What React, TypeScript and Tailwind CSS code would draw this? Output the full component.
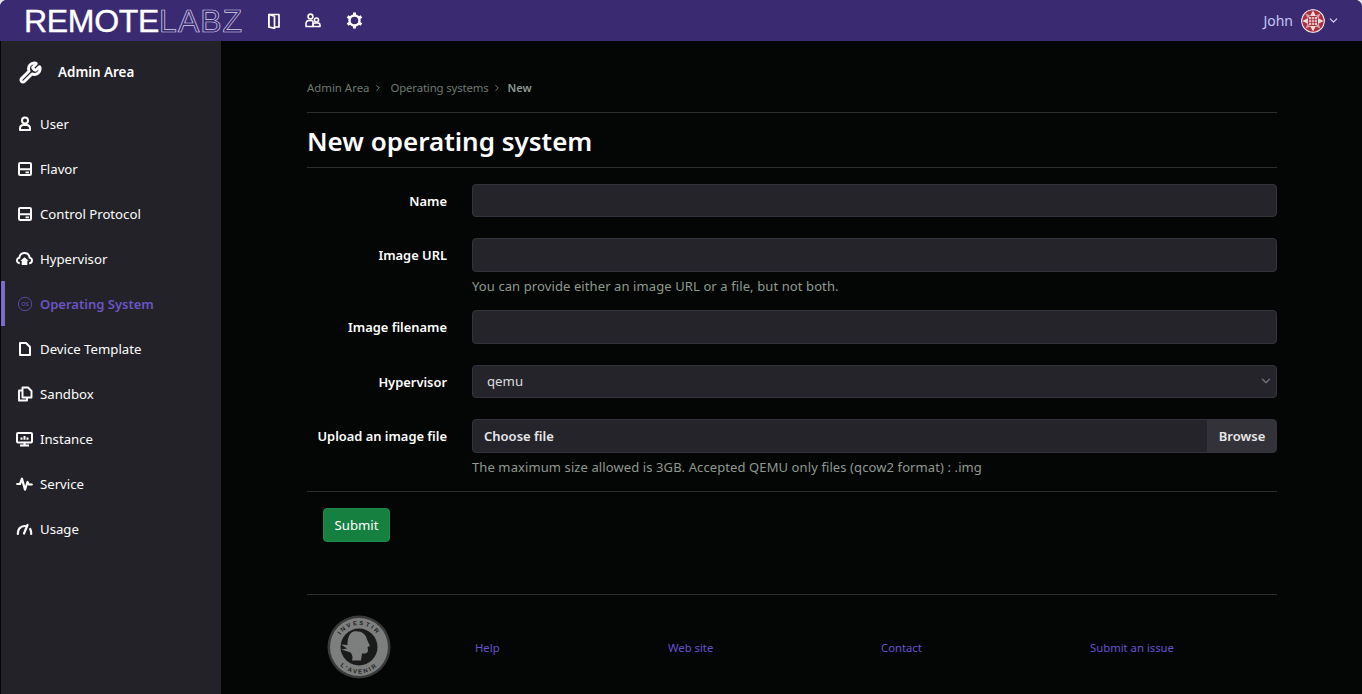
import React from 'react';
import { ChevronDown, ChevronRight, Wrench } from 'lucide-react';

const sans = "font-['Noto_Sans','Open_Sans',sans-serif]";

// small sidebar glyphs, 16px grid like the gitlab icon set
function UserIcon() {
  return (
    <svg width="16" height="16" viewBox="0 0 16 16" fill="none" stroke="white" strokeWidth="2">
      <circle cx="8" cy="4.500" r="3" />
      <path d="M3 14v-1.500c0-2 1.500-3.500 3.500-3.500h3c2 0 3.500 1.500 3.500 3.500V14z" strokeLinejoin="round" />
    </svg>
  );
}

function ServerIcon() {
  return (
    <svg width="16" height="16" viewBox="0 0 16 16" fill="none">
      <rect x="2" y="2" width="12" height="12" rx="1.200" stroke="white" strokeWidth="2" />
      <path d="M2 8.200h12" stroke="white" strokeWidth="2" />
      <rect x="8.500" y="10.500" width="3.500" height="1.800" fill="white" />
    </svg>
  );
}

function CloudIcon() {
  return (
    <svg width="17" height="16" viewBox="0 0 17 16" fill="none">
      <path d="M3.800 12.200C1.900 12.200 1 10.900 1 9.500c0-1.400 1-2.500 2.300-2.600C3.700 4 5.800 2 8.500 2s4.800 2 5.200 4.900c1.300.1 2.300 1.200 2.300 2.600 0 1.400-.9 2.700-2.800 2.700" stroke="white" strokeWidth="1.900" />
      <path d="M8.500 6.200l4.200 3.600h-1.400v4.200H5.700V9.800H4.300z" fill="white" />
    </svg>
  );
}

function OsIcon() {
  return (
    <svg width="16" height="16" viewBox="0 0 16 16" fill="none">
      <circle cx="8" cy="8" r="6.700" stroke="#5a4aa8" strokeWidth="1" />
      <text x="8" y="10" fontSize="5.500" fontFamily="Noto Sans, sans-serif" textAnchor="middle" fill="#5a4aa8">OS</text>
    </svg>
  );
}

function FileIcon() {
  return (
    <svg width="16" height="16" viewBox="0 0 16 16" fill="none" stroke="white" strokeWidth="2" strokeLinejoin="round">
      <path d="M3 2h6l4 4v8H3z" />
    </svg>
  );
}

function CopyIcon() {
  return (
    <svg width="16" height="16" viewBox="0 0 16 16" fill="none" stroke="white" strokeWidth="1.900" strokeLinejoin="round">
      <path d="M5.500 1.500h5.500l3.500 3.500v6.500h-9z" />
      <path d="M5.500 4.500H2v10h8v-3" />
    </svg>
  );
}

function MonitorIcon() {
  return (
    <svg width="17" height="16" viewBox="0 0 17 16" fill="none">
      <rect x="1" y="2" width="15" height="9.500" rx="1" stroke="white" strokeWidth="2" />
      <path d="M4.500 6.500h2v2.200h-2zM7.500 5h2v3.700h-2zM10.500 6.500h2v2.200h-2z" fill="white" />
      <path d="M4 14.500h9" stroke="white" strokeWidth="2" />
      <path d="M8.500 11.500v2.500" stroke="white" strokeWidth="2" />
    </svg>
  );
}

function PulseIcon() {
  return (
    <svg width="17" height="16" viewBox="0 0 17 16" fill="none" stroke="white" strokeWidth="2.200" strokeLinejoin="round" strokeLinecap="round">
      <path d="M1.200 8H4l2-5.300 3 11L11.500 6l1.500 2.500h2.800" />
    </svg>
  );
}

function GaugeIcon() {
  return (
    <svg width="17" height="16" viewBox="0 0 17 16" fill="none" stroke="white" strokeWidth="2.200" strokeLinecap="round">
      <path d="M1.800 13C1.500 8.500 4.500 5 8.500 5c.7 0 1.400.1 2 .3" />
      <path d="M14.200 8c.8 1.500 1.100 3.300 1 5" />
      <path d="M8 12.500L11.500 4" />
    </svg>
  );
}

function DoorIcon() {
  return (
    <svg width="12" height="16" viewBox="0 0 12 16" fill="none" stroke="white" strokeWidth="1.700" strokeLinejoin="round">
      <path d="M1 1.500h10v12.500H1z" />
      <path d="M1 1.500l5.500 1.800v12L1 14z" fill="#3a2a72" />
    </svg>
  );
}

function UsersIcon() {
  return (
    <svg width="16" height="15" viewBox="0 0 16 15" fill="none" stroke="white" strokeWidth="1.600">
      <circle cx="5.500" cy="3.500" r="2.400" />
      <circle cx="11.500" cy="7" r="2" />
      <path d="M1 13.500V11c0-2 1-3.500 3-3.500h2c1 0 1.500.5 2 1v5z" strokeLinejoin="round" />
      <path d="M8 13.500v-1c0-1.500 1-2.500 2-2.500h3c1.200 0 2 1 2 2.500v1z" strokeLinejoin="round" />
    </svg>
  );
}

function GearIcon() {
  return (
    <svg width="17" height="17" viewBox="0 0 17 17" fill="none">
      <circle cx="8.500" cy="8.500" r="5" stroke="white" strokeWidth="2.400" />
      <path d="M8.500 .5v2.500M8.500 14v2.500M1.500 4.500l2.200 1.300M13.300 11.200l2.200 1.300M1.500 12.500l2.200-1.300M13.300 5.800l2.200-1.300" stroke="white" strokeWidth="3" />
    </svg>
  );
}

function Avatar() {
  return (
    <svg width="24" height="24" viewBox="0 0 24 24" className="rounded-full">
      <circle cx="12" cy="12" r="12" fill="#e8dfe2" />
      <circle cx="12" cy="12" r="10.700" fill="#a8323f" />
      <path d="M12 1.500l3 5.500H9zM12 22.500L9 17h6zM1.500 12L7 9v6zM22.500 12L17 15V9z" fill="#f0d8da" />
      <path d="M4.500 4.500l5 2-3 3zM19.500 4.500l-2 5-3-3zM4.500 19.500l2-5 3 3zM19.500 19.500l-5-2 3-3z" fill="#d8a0a6" />
      <rect x="8" y="8" width="8" height="8" fill="#e8c4c8" />
      <path d="M10.600 8v8M13.400 8v8M8 10.600h8M8 13.400h8" stroke="#a8323f" strokeWidth="0.800" />
    </svg>
  );
}

function Medal() {
  return (
    <svg width="64" height="64" viewBox="0 0 64 64">
      <circle cx="32" cy="32" r="31.500" fill="#3a3a3a" />
      <circle cx="32" cy="32" r="29" fill="#7d7f7e" />
      <circle cx="32" cy="32" r="18.500" fill="#1a1a1a" />
      <path d="M27 16.500c7-1 12 2.500 13 8l3 6.500-2.500 1 .5 3c0 2.500-1.500 3.500-3.500 3.500L35 38.500l-1 7H25c1-3 .5-6-1.500-8l-9-3 5.500-1-6-4 6.500.5c0-7 1.500-12.500 7.500-14z" fill="#7d7f7e" />
      <defs>
        <path id="medalTop" d="M10 32a22 22 0 0 1 44 0" />
        <path id="medalBottom" d="M5.500 32a26.500 26.500 0 0 0 53 0" />
      </defs>
      <text fontSize="6" fontFamily="Liberation Sans, sans-serif" fontWeight="700" letterSpacing="2" fill="#1f1f1f">
        <textPath href="#medalTop" startOffset="50%" textAnchor="middle">INVESTIR</textPath>
      </text>
      <text fontSize="6" fontFamily="Liberation Sans, sans-serif" fontWeight="700" letterSpacing="1.800" fill="#1f1f1f">
        <textPath href="#medalBottom" startOffset="50%" textAnchor="middle">L'AVENIR</textPath>
      </text>
    </svg>
  );
}

const menu = [
  { label: 'User', icon: <UserIcon /> },
  { label: 'Flavor', icon: <ServerIcon /> },
  { label: 'Control Protocol', icon: <ServerIcon /> },
  { label: 'Hypervisor', icon: <CloudIcon /> },
  { label: 'Operating System', icon: <OsIcon />, active: true },
  { label: 'Device Template', icon: <FileIcon /> },
  { label: 'Sandbox', icon: <CopyIcon /> },
  { label: 'Instance', icon: <MonitorIcon /> },
  { label: 'Service', icon: <PulseIcon /> },
  { label: 'Usage', icon: <GaugeIcon /> },
];

function Field({ label, help, children }: { label: string; help?: string; children: React.ReactNode }) {
  return (
    <div className="flex mb-[21px]">
      <label className="w-[140px] shrink-0 whitespace-nowrap pt-[7px] text-right text-[12.9px] font-semibold leading-5 text-white">{label}</label>
      <div className="ml-[25px] flex-1">
        {children}
        {help && <p className="mt-[5px] -mb-[6px] text-[13px] leading-[18px] tracking-[0.1px] text-[#8e9a90]">{help}</p>}
      </div>
    </div>
  );
}

const inputCls = 'block h-[33.6px] w-full rounded border border-[#35343c] bg-[#25242a]';

export default function App() {
  return (
    <div className={`${sans} h-[694px] w-[1362px] overflow-hidden bg-[#dfe3ea]`}>
      <div className="flex h-full flex-col overflow-hidden rounded-t-[7px] bg-[#040505] pl-px">
        <header className="-ml-px flex h-[41px] shrink-0 items-center bg-[#3a2a72] pl-[24px] pr-[22px]">
          <div className="flex items-center text-[32px] leading-none tracking-[-0.3px] text-white font-['Liberation_Sans',sans-serif]">
            <span className="[-webkit-text-stroke:0.4px_white]">REMOTE</span>
            <span className="tracking-[1px] text-transparent [-webkit-text-stroke:0.7px_#d8d4e8]">LABZ</span>
          </div>
          <div className="ml-[25px] flex items-center gap-[25px]">
            <DoorIcon />
            <UsersIcon />
            <GearIcon />
          </div>
          <div className="ml-auto flex items-center text-sm text-[#c4c8f0]">
            <span>John</span>
            <span className="ml-2"><Avatar /></span>
            <ChevronDown size={13} className="ml-[2px] text-[#e0dcf0]" />
          </div>
        </header>
        <div className="flex min-h-0 flex-1">
          <aside className="w-[220px] shrink-0 bg-[#232228]">
            <div className="flex h-[60px] items-center pl-[18px] pt-[2px] text-[13.4px] font-semibold text-white">
              <Wrench size={23} strokeWidth={3} />
              <span className="ml-[16px]">Admin Area</span>
            </div>
            <nav>
              {menu.map((m) => (
                <div
                  key={m.label}
                  className={`flex h-[45px] items-center text-[13.2px] ${m.active ? 'border-l-[4px] border-[#7e6bc9] pl-[11px] font-semibold text-[13px] text-[#6a55c4]' : 'pl-[15px] text-white'}`}
                >
                  <span className="flex w-[17px] justify-center">{m.icon}</span>
                  <span className="ml-[7px] pt-[2px]">{m.label}</span>
                </div>
              ))}
            </nav>
          </aside>
          <main className="ml-[86px] w-[970px] shrink-0 pt-[36px]">
            <nav className="flex h-[21px] items-center text-[11.4px] text-[#6c7a70]">
              <span>Admin Area</span>
              <ChevronRight size={10} className="mx-[4px] text-[#8d9991]" />
              <span className="ml-[3px] tracking-[-0.15px]">Operating systems</span>
              <ChevronRight size={10} className="mx-[3px] text-[#8d9991]" />
              <span className="ml-[3px] pt-[1px] text-[11px] font-semibold text-[#8d9991]">New</span>
            </nav>
            <div className="mt-[14px] flex h-[56px] items-center border-y border-[#2e2e2e] pt-[1px]">
              <h1 className="text-[26px] font-semibold leading-none text-white">New operating system</h1>
            </div>
            <form className="mt-[15.750px]">
              <Field label="Name"><div className={inputCls} /></Field>
              <Field label="Image URL" help="You can provide either an image URL or a file, but not both."><div className={inputCls} /></Field>
              <Field label="Image filename"><div className={inputCls} /></Field>
              <Field label="Hypervisor">
                <div className={`${inputCls} flex items-center justify-between pl-[14px] pr-[3px] text-[13.2px] text-[#dddddd]`}>
                  <span className="pt-[1px]">qemu</span>
                  <ChevronDown size={14} className="text-[#77777c]" />
                </div>
              </Field>
              <Field label="Upload an image file" help="The maximum size allowed is 3GB. Accepted QEMU only files (qcow2 format) : .img">
                <div className={`${inputCls} flex items-center overflow-hidden text-[13px] font-semibold text-[#e8e8e8]`}>
                  <span className="flex-1 pl-[11px] pt-[1px]">Choose file</span>
                  <span className="flex h-full w-[69px] items-center justify-center border-l border-[#35343c] bg-[#333238] pt-[1px]">Browse</span>
                </div>
              </Field>
              <div className="border-t border-[#2e2e2e] pl-4 pt-4">
                <button type="button" className="h-[34px] w-[67px] rounded border border-[#1f8a50] bg-[#15803f] pt-[2px] text-[13.2px] text-white">Submit</button>
              </div>
            </form>
            <footer className="mt-[52px] flex h-[100px] border-t border-[#2e2e2e] pt-[20px]">
              <div className="ml-[20px] w-[64px]"><Medal /></div>
              <div className="ml-[84px] flex h-[68px] items-center text-[11.3px] text-[#6653d0]">
                <span className="w-[193px]">Help</span>
                <span className="w-[213px]">Web site</span>
                <span className="w-[209px]">Contact</span>
                <span>Submit an issue</span>
              </div>
            </footer>
          </main>
        </div>
      </div>
    </div>
  );
}
